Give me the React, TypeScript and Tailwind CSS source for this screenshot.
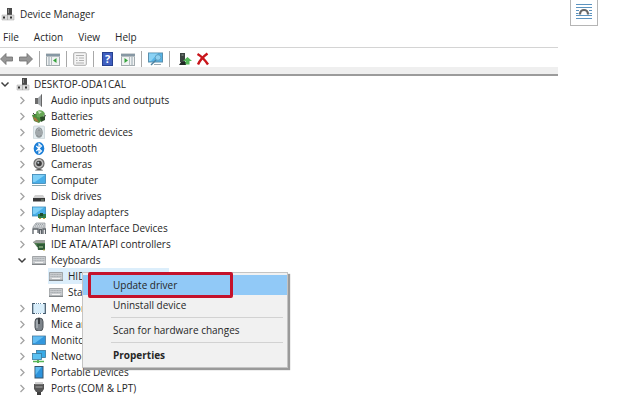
import React, { useState } from 'react'

const PcIcon = () => (
  <svg className="block h-3.5 w-3.5" viewBox="0 0 14 14" aria-hidden="true">
    <rect x="6" y="1" width="5" height="8" fill="#4a4a4a" />
    <rect x="7" y="2" width="1" height="4" fill="#8a8a8a" />
    <path d="M1 8h5.500v5H1zM6.500 8H13v5H6.500z" fill="#dcdcdc" stroke="#a5a5a5" strokeWidth=".5" />
    <path d="M2 9.500h2v2H2zM9 9.500h2v2H9z" fill="#333" />
  </svg>
)

const icons: Record<string, React.ReactNode> = {
  audio: (
    <>
      <path d="M3 5h3v6H3z" fill="#6c6c6c" />
      <path d="M6 5l4-4v13l-4-3z" fill="#a4a8ab" />
      <path d="M9 2l1-1v13l-1-1z" fill="#666" />
    </>
  ),
  battery: (
    <>
      <path d="M0 6l6-2 5 6-4 4-5-2z" fill="#4d8d3c" />
      <path d="M4 3c3-3 8-2 9 2l-3 4-5-1z" fill="#67a855" />
      <path d="M6 2l4 1-3 2z" fill="#cfe6c6" />
      <path d="M1 8l3 1 3 4-4-1z" fill="#a7733e" />
      <path d="M8 8l5-1v4l-4 2z" fill="#2d4f28" />
      <path d="M1 4l2 2M12 6l2 1" stroke="#444" />
    </>
  ),
  biometric: (
    <>
      <rect x="1.500" y="1" width="11" height="13" rx="1" fill="#e3ecef" stroke="#c3cfd3" strokeWidth=".7" />
      <ellipse cx="7" cy="7.500" rx="3.800" ry="5.200" fill="#8f9699" />
      <path d="M5 10V6c0-3 4-3 4 0v4M7 6v5" stroke="#c4cbce" strokeWidth=".7" fill="none" />
    </>
  ),
  bluetooth: (
    <>
      <ellipse cx="7" cy="7.500" rx="5.300" ry="6.500" fill="#1c7fd8" />
      <path d="M4.300 5l5.200 5-2.500 2.200V2.800L9.500 5l-5.200 5" stroke="#fff" strokeWidth="1.100" fill="none" />
    </>
  ),
  camera: (
    <>
      <path d="M3 13.500c1-2 7-2 8 0z" fill="#555" />
      <circle cx="7" cy="6.500" r="5" fill="#bdbdbd" stroke="#6b6b6b" strokeWidth="1.200" />
      <circle cx="7" cy="6.500" r="2.800" fill="#3c3c3c" />
      <circle cx="6.300" cy="5.800" r="1" fill="#b9c4cc" />
    </>
  ),
  computer: (
    <>
      <rect x=".5" y="1.500" width="13" height="9" fill="#48aee8" stroke="#3b87b5" strokeWidth=".8" />
      <path d="M1 2h12L3 9H1z" fill="#7fd0f7" />
      <path d="M0 12.500h14" stroke="#8aa7ae" />
    </>
  ),
  disk: (
    <>
      <path d="M3 6h8l2 3H1z" fill="#d0d0d0" />
      <rect x="1" y="9" width="12" height="3.500" fill="#383838" />
      <path d="M9 11h3" stroke="#9fb8a0" strokeWidth=".8" />
    </>
  ),
  display: (
    <>
      <rect x=".5" y="2" width="13" height="9" fill="#48aee8" stroke="#3b87b5" strokeWidth=".8" />
      <path d="M1 2.500h11L3 9H1z" fill="#7fd0f7" />
      <path d="M6 9h8v4H6z" fill="#2f7d4a" />
      <path d="M8 8h3v3H8z" fill="#1e4b31" />
      <path d="M7 13.500h2M11 13.500h2" stroke="#c8a23c" />
    </>
  ),
  hid: (
    <>
      <path d="M1 6l3-4h9v5H1z" fill="#cfd3d6" stroke="#8b9196" strokeWidth=".7" />
      <path d="M3 5h9M4 3.500h8" stroke="#8f969b" strokeWidth=".8" strokeDasharray="1 1" />
      <path d="M1 13V8h5v4M7.500 13V8.500h2V13M11 13V8h2.500v5" stroke="#5b6167" strokeWidth="1.300" fill="none" />
    </>
  ),
  ide: (
    <>
      <path d="M1 5l3-2h9v3H1z" fill="#9ca09c" />
      <path d="M2 6h11v4H5z" fill="#4e7a4e" />
      <path d="M5 7h8v6H6z" fill="#2f5b37" />
      <path d="M7 10h4" stroke="#b3d49f" />
      <path d="M11 13h2" stroke="#b9a54a" />
    </>
  ),
  keyboard: (
    <>
      <path d="M.5 3.500h13l.5 7.500H0z" fill="#c9cccf" stroke="#85898c" strokeWidth=".7" />
      <path d="M1.500 5.500h11M1.500 7.500h11" stroke="#9fa4a8" strokeWidth=".8" strokeDasharray="1.200 .4" />
      <path d="M3 9.500h8" stroke="#f3f3f3" />
      <path d="M0 11.500h14" stroke="#6c7073" strokeWidth=".8" />
    </>
  ),
  memory: (
    <>
      <rect x="1" y="3" width="12" height="9" fill="#d8eefb" />
      <path d="M3 2.500H.7v10H3M11 2.500h2.300v10H11" stroke="#41586b" strokeWidth="1.200" fill="none" />
      <path d="M4 2.500h6M4 12.500h6" stroke="#6a8ca6" strokeDasharray="1 1" />
    </>
  ),
  mouse: (
    <>
      <rect x="3" y="1" width="8" height="13" rx="3.500" fill="#7d848b" stroke="#4d5359" />
      <path d="M7 1v6" stroke="#23272b" strokeWidth="1.500" />
      <path d="M5 3v8" stroke="#c3c9ce" />
    </>
  ),
  monitor: (
    <>
      <rect x=".5" y="3" width="13" height="8.500" fill="#3297dd" stroke="#4b7896" strokeWidth=".8" />
      <path d="M1 3.500h11L3 10H1z" fill="#63bdf2" />
    </>
  ),
  network: (
    <>
      <rect x="4.500" y="1.500" width="9" height="7" fill="#38aae6" stroke="#39799e" strokeWidth=".8" />
      <rect x=".5" y="4.500" width="9" height="6" fill="#5ac1f2" stroke="#39799e" strokeWidth=".8" />
      <path d="M1 12.500h11" stroke="#56b457" strokeWidth="1.500" />
      <path d="M6 11v3" stroke="#56b457" strokeWidth="2" />
    </>
  ),
  portable: (
    <>
      <rect x="3" y="1.500" width="8" height="11.500" fill="#2d93dc" stroke="#37536b" />
      <path d="M3.500 2h6l-6 8z" fill="#60bcf0" />
    </>
  ),
  port: (
    <>
      <path d="M2 3h10v5l-2 3H4L2 8z" fill="#555" />
      <path d="M4 1v3M6 1v3M8 1v3M10 1v3" stroke="#999" strokeWidth=".9" />
      <path d="M3.500 6h7" stroke="#aaa" />
      <path d="M5 11h4v3H5z" fill="#3f3f3f" />
    </>
  ),
}

const Glyph = ({ name }: { name: string }) => (
  <svg className="block h-3.5 w-3.5 shrink-0" viewBox="0 0 14 14" aria-hidden="true">
    {icons[name]}
  </svg>
)

const devices = [
  { name: 'Audio inputs and outputs', icon: 'audio' },
  { name: 'Batteries', icon: 'battery' },
  { name: 'Biometric devices', icon: 'biometric' },
  { name: 'Bluetooth', icon: 'bluetooth' },
  { name: 'Cameras', icon: 'camera' },
  { name: 'Computer', icon: 'computer' },
  { name: 'Disk drives', icon: 'disk' },
  { name: 'Display adapters', icon: 'display' },
  { name: 'Human Interface Devices', icon: 'hid' },
  { name: 'IDE ATA/ATAPI controllers', icon: 'ide' },
  {
    name: 'Keyboards',
    icon: 'keyboard',
    children: ['HID Keyboard Device', 'Standard PS/2 Keyboard'],
  },
  { name: 'Memory devices', icon: 'memory' },
  { name: 'Mice and other devices', icon: 'mouse' },
  { name: 'Monitors', icon: 'monitor' },
  { name: 'Network adapters', icon: 'network' },
  { name: 'Portable Devices', icon: 'portable' },
  { name: 'Ports (COM & LPT)', icon: 'port' },
]

const Chevron = ({ open }: { open: boolean }) => (
  <svg className="block h-2.5 w-2.5" viewBox="0 0 10 10" fill="none" aria-hidden="true">
    {open ? (
      <path d="M1.500 3.500L5 7l3.500-3.500" stroke="#404040" strokeWidth="1.500" />
    ) : (
      <path d="M3.500 2L7 5.500 3.500 9" stroke="#a3a3a3" strokeWidth="1.300" />
    )}
  </svg>
)

const Divider = () => <span className="h-4 w-px bg-[#a8a8a8]" />

const ContextMenu = () => (
  <div
    role="menu"
    className="absolute top-1 left-[34px] z-10 w-[206px] border border-[#c4c4c4] bg-[#f1f1f1] pt-0.5 pb-0.5 shadow-[2px_2px_1px_#9a9a9a]"
  >
    <button role="menuitem" className="block h-5 w-full bg-[#91c9f7] pl-[30px] text-left">
      Update driver
    </button>
    <div className="absolute -top-px left-[5px] h-[26px] w-[145px] rounded-xs border-3 border-[#c4122b]" />
    <button role="menuitem" className="block h-5 w-full pl-[30px] text-left">
      Uninstall device
    </button>
    <hr className="my-0.5 mr-1 ml-7 border-[#d2d2d2]" />
    <button role="menuitem" className="block h-5 w-full pl-[30px] text-left">
      Scan for hardware changes
    </button>
    <hr className="my-0.5 mr-1 ml-7 border-[#d2d2d2]" />
    <button role="menuitem" className="block h-5 w-full pl-[30px] text-left font-bold">
      Properties
    </button>
  </div>
)

const Toolbar = () => (
  <div className="flex h-5 items-center border-t border-[#d4d4d4] pt-0.5">
    <button aria-label="Back" className="w-[13px]">
      <svg className="block h-3.5 w-[13px]" viewBox="0 0 13 14">
        <path d="M.5 7L6 1.500V5h6.500v4H6v3.500z" fill="#969696" stroke="#6e6e6e" strokeWidth=".8" />
      </svg>
    </button>
    <button aria-label="Forward" className="ml-1.5">
      <svg className="block h-3.5 w-3.5" viewBox="0 0 14 14">
        <path d="M13.500 7L8 1.500V5H.5v4H8v3.500z" fill="#969696" stroke="#6e6e6e" strokeWidth=".8" />
      </svg>
    </button>
    <div className="ml-1.5 flex items-center gap-1.5">
      <Divider />
      <button aria-label="Show console tree">
        <svg className="block h-3.5 w-3.5" viewBox="0 0 14 14">
          <rect x=".5" y="2" width="13" height="11.500" fill="#f0f2f2" stroke="#a3abaf" />
          <path d="M0 3h14" stroke="#8798a4" strokeWidth="2" />
          <path d="M2 6h2M2 8h2M2 10h2M2 12h2" stroke="#9aa9b2" />
          <path d="M5.500 4v9.500M0 4.500h14" stroke="#b5bdc1" />
          <path d="M10.500 6v5L7 8.500z" fill="#35a33b" />
        </svg>
      </button>
      <Divider />
      <button aria-label="Properties">
        <svg className="block h-3.5 w-3.5" viewBox="0 0 14 14">
          <rect x=".7" y=".7" width="12.600" height="12.600" rx="1" fill="#f4f4f4" stroke="#a9a9a9" />
          <path d="M3 3.500h8M3 6h1.500M6 6h5M3 8.500h1.500M6 8.500h5M3 11h8" stroke="#b0b0b0" />
        </svg>
      </button>
      <Divider />
      <button aria-label="Help" className="mx-0.5 h-3.5 w-[11px] border border-[#26408f] bg-[#3f5fc0] text-[11px] leading-3 font-bold text-white">
        ?
      </button>
      <button aria-label="Show action pane">
        <svg className="block h-3.5 w-3.5" viewBox="0 0 14 14">
          <rect x=".5" y="2" width="13" height="11.500" fill="#f0f2f2" stroke="#a3abaf" />
          <path d="M0 3h14" stroke="#8798a4" strokeWidth="2" />
          <path d="M10 6h2M10 8h2M10 10h2M10 12h2" stroke="#9aa9b2" />
          <path d="M8.500 4v9.500M0 4.500h14" stroke="#b5bdc1" />
          <path d="M3.500 6v5L7 8.500z" fill="#35a33b" />
        </svg>
      </button>
      <Divider />
      <button aria-label="Scan for hardware changes">
        <svg className="block h-3.5 w-[15px]" viewBox="0 0 15 14">
          <rect x=".5" y="1" width="14" height="9" fill="#55b4e8" stroke="#5b8fac" />
          <path d="M1 1.500h9L3 9H1z" fill="#8ad2f5" />
          <circle cx="10" cy="5.500" r="2.800" fill="#8fd0f0" stroke="#5c98b8" strokeWidth=".8" />
          <path d="M8 8l-5 5" stroke="#4d82a0" strokeWidth="1.500" />
          <path d="M6 12.500h7" stroke="#9aaab3" />
        </svg>
      </button>
      <Divider />
    </div>
    <button aria-label="Update driver" className="ml-2">
      <svg className="block h-3.5 w-3.5" viewBox="0 0 14 14">
        <path d="M2 1h5v9H2z" fill="#3b4440" />
        <path d="M3.500 3h2" stroke="#9ba39f" />
        <path d="M1 13h7v-3H3z" fill="#202724" />
        <path d="M9.500 5L14 9h-2.500v3.500h-4V9H5z" fill="#55b85a" />
      </svg>
    </button>
    <button aria-label="Uninstall device" className="ml-1">
      <svg className="block h-3.5 w-3.5" viewBox="0 0 14 14">
        <path d="M1.500 2C5 4 9 8 12 12.500M11.500 1.500C8 4 4 8 2 12.500" stroke="#c9151b" strokeWidth="2.400" fill="none" />
      </svg>
    </button>
  </div>
)

const App = () => {
  const [closed, setClosed] = useState(false)

  return (
    <div className="flex min-h-screen items-start overflow-hidden bg-white font-['Open_Sans','Noto_Sans',sans-serif] text-[10px] leading-4 text-[#262626]">
      <main className="min-w-0 flex-1">
        <header className="flex h-7 items-center gap-[5px] pl-px">
          <PcIcon />
          <h1 className="text-[10px]">Device Manager</h1>
        </header>
        <nav className="flex h-[19px] items-center gap-[15px] pb-0.5 pl-[3px]">
          <button>File</button>
          <button>Action</button>
          <button>View</button>
          <button>Help</button>
        </nav>
        <Toolbar />
        <div className="h-[9px] border-b-2 border-[#9b9b9b] bg-[#efefef]" />

        <div className="flex h-4 items-center">
          <button aria-label="Toggle computer" aria-expanded="true" className="w-4">
            <Chevron open />
          </button>
          <PcIcon />
          <span className="ml-1">DESKTOP-ODA1CAL</span>
        </div>
        <ul>
          {devices.map((device) => (
            <li key={device.name}>
              <div className="flex h-4 items-center pl-[17px]">
                <button
                  aria-label={device.name}
                  aria-expanded={device.children ? !closed : false}
                  onClick={() => device.children && setClosed(!closed)}
                  className="w-[15px]"
                >
                  <Chevron open={!!device.children && !closed} />
                </button>
                <Glyph name={device.icon} />
                <span className="ml-[5px]">{device.name}</span>
              </div>
              {device.children && !closed && (
                <ul className="pl-12">
                  {device.children.map((child, i) => (
                    <li
                      key={child}
                      className={
                        i === 0
                          ? 'relative flex h-4 w-[121px] items-center bg-[#dceefb]'
                          : 'flex h-4 items-center'
                      }
                    >
                      <span className="pl-px">
                        <Glyph name="keyboard" />
                      </span>
                      <span className="ml-[5px] whitespace-nowrap">{child}</span>
                      {i === 0 && <ContextMenu />}
                    </li>
                  ))}
                </ul>
              )}
            </li>
          ))}
        </ul>
      </main>

      <aside className="w-[74px] shrink-0 pl-3">
        <button aria-label="Layout options" className="flex h-[26px] w-7 items-center justify-center border border-t-0 border-[#b5b5b5] pb-1">
          <svg className="block h-4 w-4" viewBox="0 0 16 16" fill="none">
            <path d="M0 1.500h16M0 4.500h16M0 7.500h3M13 7.500h3M0 10.500h3M13 10.500h3M0 12.500h16M0 15.500h16" stroke="#5b93bf" />
            <path d="M2.500 12V8.500L5 5.500h6l2.500 3V12z" fill="#fff" />
            <path d="M4 11.500c0-6 8-6 8 0" stroke="#666" strokeWidth="2.200" />
          </svg>
        </button>
      </aside>
    </div>
  )
}

export default App
